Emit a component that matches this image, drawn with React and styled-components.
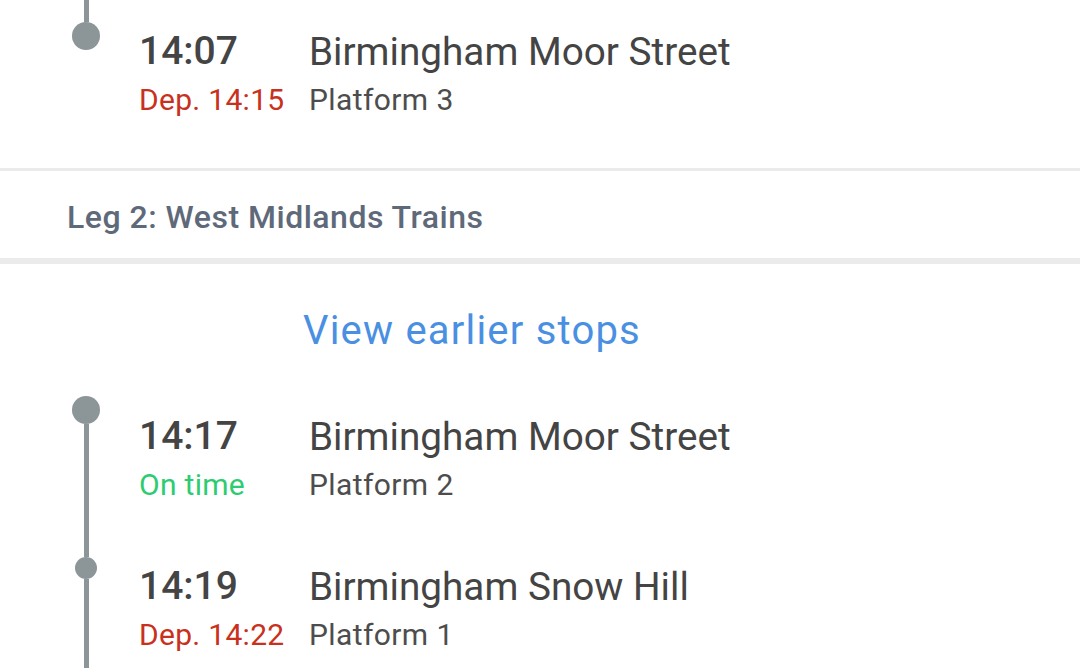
import React from "react"
import styled, { createGlobalStyle } from "styled-components"

const GlobalStyle = createGlobalStyle`
  html, body {
    margin: 0;
    padding: 0;
    background: #ffffff;
  }
  body {
    font-family: Roboto, "Noto Sans", Arial, sans-serif;
    -webkit-font-smoothing: antialiased;
  }
`

const Page = styled.div`
  width: 1080px;
  height: 668px;
  overflow: hidden;
  background: #ffffff;
`

const Stop = styled.div`
  display: flex;
  height: ${({ height }) => height}px;
`

const Rail = styled.div`
  width: 139px;
  flex-shrink: 0;
  display: flex;
  flex-direction: column;
  padding-left: 72px;
  box-sizing: border-box;
`

const RailInner = styled.div`
  width: 28px;
  display: flex;
  flex-direction: column;
  align-items: center;
  height: 100%;
`

const Segment = styled.div`
  width: 5px;
  background: ${({ hidden }) => (hidden ? "transparent" : "#8c9598")};
  height: ${({ size }) => (size ? `${size}px` : "auto")};
  flex: ${({ size }) => (size ? "none" : "1")};
`

const Dot = styled.div`
  width: ${({ small }) => (small ? 22 : 28)}px;
  height: ${({ small }) => (small ? 22 : 28)}px;
  border-radius: 50%;
  background: #8c9598;
  flex-shrink: 0;
`

const Info = styled.div`
  display: grid;
  grid-template-columns: 170px auto;
  grid-auto-rows: 48px;
  align-items: center;
  padding-top: ${({ pad }) => pad}px;
  align-content: start;
`

const Time = styled.div`
  font-size: 39px;
  font-weight: 500;
  color: #444444;
  white-space: nowrap;
`

const Station = styled.div`
  font-size: 38.7px;
  color: #444444;
  white-space: nowrap;
`

const Status = styled.div`
  font-size: 30px;
  letter-spacing: 0.3px;
  color: ${({ tone }) => (tone === "ok" ? "#2ecc71" : "#c8311d")};
  white-space: nowrap;
`

const Platform = styled.div`
  font-size: 30px;
  letter-spacing: 0.4px;
  color: #4d4d4d;
  white-space: nowrap;
`

const Divider = styled.div`
  height: ${({ thick }) => (thick ? 6 : 3)}px;
  background: #ebebeb;
`

const LegHeader = styled.div`
  height: 87px;
  box-sizing: border-box;
  display: flex;
  align-items: center;
  padding: 5px 0 0 67px;
  font-size: 32px;
  letter-spacing: 0.5px;
  font-weight: 500;
  color: #5e6979;
`

const EarlierRow = styled.div`
  height: 132px;
  display: flex;
  align-items: center;
  padding-left: 303px;
  box-sizing: border-box;
`

const EarlierLink = styled.a`
  font-size: 40px;
  letter-spacing: 1.2px;
  color: #4a90e2;
  text-decoration: none;
  cursor: pointer;
`

const StopRow = ({ pad, height, first, last, small, time, status, tone, station, platform }) => (
  <Stop height={height}>
    <Rail>
      <RailInner>
        <Segment size={pad - 5} hidden={first} />
        <Dot small={small} />
        {!last && <Segment />}
      </RailInner>
    </Rail>
    <Info pad={pad}>
      <Time>{time}</Time>
      <Station>{station}</Station>
      <Status tone={tone}>{status}</Status>
      <Platform>{platform}</Platform>
    </Info>
  </Stop>
)

const App = () => (
  <Page>
    <GlobalStyle />
    <StopRow
      pad={27}
      height={168}
      last
      time="14:07"
      status="Dep. 14:15"
      station="Birmingham Moor Street"
      platform="Platform 3"
    />
    <Divider />
    <LegHeader>Leg 2: West Midlands Trains</LegHeader>
    <Divider thick />
    <EarlierRow>
      <EarlierLink>View earlier stops</EarlierLink>
    </EarlierRow>
    <StopRow
      pad={16}
      height={150}
      first
      time="14:17"
      status="On time"
      tone="ok"
      station="Birmingham Moor Street"
      platform="Platform 2"
    />
    <StopRow
      pad={16}
      height={150}
      small
      time="14:19"
      status="Dep. 14:22"
      station="Birmingham Snow Hill"
      platform="Platform 1"
    />
  </Page>
)

export default App
